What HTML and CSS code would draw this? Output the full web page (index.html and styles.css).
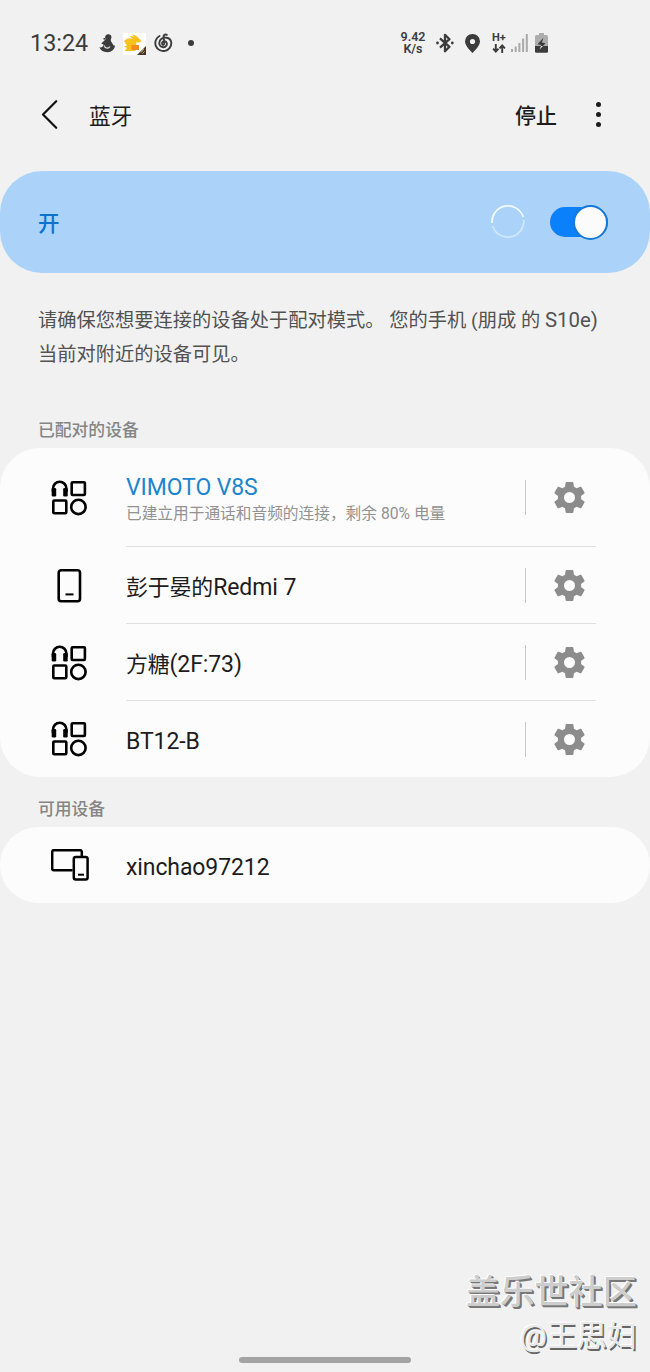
FILE: index.html
```html
<!DOCTYPE html>
<html lang="zh-CN">

<head>
    <meta charset="UTF-8">
    <meta name="viewport" content="width=device-width, initial-scale=1.0">
    <title>蓝牙</title>
    <link rel="stylesheet" href="styles.css">
</head>

<body>
    <!-- Shared icons -->
    <svg class="icon-defs" width="0" height="0">
        <symbol id="icon-audio" viewBox="0 0 36 36">
            <g fill="none" stroke="#000" stroke-width="2.6">
                <path d="M2 12V8.500a6.700 6.700 0 0 1 13.400 0V12" />
                <rect x="20.700" y="2.200" width="13.200" height="12.800" rx="1" />
                <rect x="2.300" y="20.500" width="13" height="12.800" rx="1" />
                <circle cx="27.400" cy="26.900" r="7.200" />
            </g>
            <rect x="0.700" y="8" width="4.500" height="8.500" rx="1.300" />
            <rect x="12.200" y="8" width="4.500" height="8.500" rx="1.300" />
        </symbol>
        <symbol id="icon-gear" viewBox="2.4 2.4 19.2 19.2">
            <path d="M19.14 12.94c.04-.3.06-.61.06-.94 0-.32-.02-.64-.07-.94l2.03-1.58a.49.49 0 0 0 .12-.61l-1.92-3.32a.49.49 0 0 0-.59-.22l-2.39.96a7 7 0 0 0-1.62-.94l-.36-2.54a.48.48 0 0 0-.48-.41h-3.84a.47.47 0 0 0-.47.41l-.36 2.54c-.59.24-1.13.57-1.62.94l-2.39-.96a.48.48 0 0 0-.59.22L2.74 8.87a.48.48 0 0 0 .12.61l2.03 1.58c-.05.3-.09.63-.09.94s.02.64.07.94l-2.03 1.58a.49.49 0 0 0-.12.61l1.92 3.32c.12.22.37.29.59.22l2.39-.96c.5.38 1.03.7 1.62.94l.36 2.54c.05.24.24.41.48.41h3.84c.24 0 .44-.17.47-.41l.36-2.54c.59-.24 1.13-.56 1.62-.94l2.39.96c.22.08.47 0 .59-.22l1.92-3.32a.48.48 0 0 0-.12-.61l-2.01-1.58zM12 15.4a3.4 3.4 0 1 1 0-6.8 3.4 3.4 0 0 1 0 6.8z" />
        </symbol>
    </svg>

    <div class="status-bar">
        <div class="status-left">
            <span class="clock">13:24</span>
            <svg class="ico-app" width="16" height="19" viewBox="0 0 16 19">
                <circle cx="9.3" cy="3.3" r="3.1" />
                <path d="M6.3 3.6 3.6 4.9l3 1.1zM7 5l4.800.3c-.3 2 .6 2.700 1.500 4C14.500 10.800 14.300 12 16 11.500c-.4 3.800-3.200 6.700-7.600 6.700-4 0-7-1.700-8.100-4.900 2.200.5 3.800-.5 4.500-2.500L2.200 9.600z" />
                <path d="M5.500 11.500c0 3 3.800 3.500 5.500 1" fill="none" stroke="#f1f1f1" stroke-width="1.100" />
            </svg>
            <svg class="ico-deer" width="23" height="22" viewBox="0 0 23 22">
                <path d="M0 0h23v22H0z" fill="#fff" />
                <path d="M1 8 4.500 5.500h5L6.500 3l4.500.5L8.500 1l5 2 2.500 2.500L18.500 8l-2 1.500-3-.2L12.500 14v4H1.500l2.500-3-3-1.500 3-1z" fill="#f7c21c" />
                <path d="M8.500 12H16v5H8.500z" fill="#f28a1e" />
                <path d="M23 13v9h-9z" fill="#4a3325" />
                <path d="m18 19.500 3-3.500M19.500 20.500l2-2" stroke="#c9ae91" stroke-width="1" />
            </svg>
            <svg class="ico-music" width="19" height="20" viewBox="0 0 19 20" fill="none" stroke="#3c3c3c" stroke-width="1.900" stroke-linecap="round">
                <path d="M5.500 3A8 8 0 1 0 17.300 9.500C17 7 15 5 12.500 4.700 8.500 4.200 5.500 6.500 5.300 9.800c-.2 3 2 4.500 4.200 4.400 2.400-.2 3.700-2 3.300-4-.5-2.300-3.700-2.600-4.600-.7-.6 1.500.5 2.600 1.500 2.200 1.300-.6.300-4-.1-7.700-.2-2 1.400-3 3.200-2.200" />
            </svg>
            <span class="more-dot"></span>
        </div>
        <div class="status-right">
            <span class="net-speed"><span>9.42</span><span>K/s</span></span>
            <svg class="ico-bt" width="18" height="20" viewBox="0 0 18 20">
                <path d="m4 5.300 9.500 8.500L9 18.200V1.800l4.500 4.400L4 14.700" fill="none" stroke="#3c3c3c" stroke-width="2.300" stroke-linejoin="round" />
                <circle cx="1.500" cy="10" r="1.400" />
                <circle cx="16.300" cy="10" r="1.400" />
            </svg>
            <svg class="ico-pin" width="15" height="19" viewBox="0 0 15 19">
                <path fill-rule="evenodd" d="M7.500 0A7.400 7.400 0 0 0 0 7.300C0 12.300 7.500 19 7.500 19S15 12.300 15 7.300A7.400 7.400 0 0 0 7.500 0zm0 4.900a2.600 2.600 0 1 1 0 5.200 2.600 2.600 0 0 1 0-5.200z" />
            </svg>
            <span class="net-type">
                <span>H+</span>
                <svg width="14" height="9" viewBox="0 0 13 9" fill="none" stroke="#3c3c3c" stroke-width="1.900">
                    <path d="M3.300 0v7.500M.6 4.700l2.700 2.900L6 4.700M9.700 9V1.500M7 4.300l2.700-2.900 2.700 2.900" />
                </svg>
            </span>
            <svg class="ico-signal" width="17" height="18" viewBox="0 0 17 18">
                <path d="M0 15h2v3H0zM3.700 12.500h2V18h-2zM7.400 9h2v9h-2zM11.100 4.500h2V18h-2zM14.800 0h2v18h-2z" fill="#a9a9a9" />
            </svg>
            <svg class="ico-battery" width="13" height="20" viewBox="0 0 13 20">
                <path d="M4 0h5v2h2.500A1.500 1.500 0 0 1 13 3.500V13H0V3.500A1.500 1.500 0 0 1 1.500 2H4z" fill="#adadad" />
                <path d="M0 13h13v5.500a1.300 1.300 0 0 1-1.300 1.300H1.300A1.300 1.300 0 0 1 0 18.500z" />
                <path d="M8.500 4.800 2.500 11.300l3.600.7-1.600 4.500 6-6.200-3.700-.8z" />
                <path d="m6.100 13-1.600 3.500L8 13z" fill="#eee" />
            </svg>
        </div>
    </div>

    <header class="toolbar">
        <svg class="back" width="17" height="29" viewBox="0 0 17 29">
            <path d="M15.200 1.200 2 14.500l13.200 13.300" fill="none" stroke="#111" stroke-width="2.200" stroke-linecap="round" stroke-linejoin="round" />
        </svg>
        <h1>蓝牙</h1>
        <span class="stop">停止</span>
        <span class="menu"><i></i><i></i><i></i></span>
    </header>

    <section class="switch-bar">
        <span class="switch-label">开</span>
        <svg class="spinner" width="34" height="34" viewBox="0 0 34 34" fill="none" stroke-width="1.700">
            <path d="M1 18A16 16 0 0 1 32.200 12" stroke="#f2fbff" />
            <path d="M32.800 15A16 16 0 0 1 1.600 21" stroke="#cfe8fb" />
        </svg>
        <span class="toggle"><span class="thumb"></span></span>
    </section>

    <p class="hint">请确保您想要连接的设备处于配对模式。 您的手机 (朋成 的 <span class="model">S10e)</span><br>当前对附近的设备可见。</p>

    <h2 class="paired-title">已配对的设备</h2>
    <div class="card">
        <div class="device connected">
            <svg class="device-icon"><use href="#icon-audio" /></svg>
            <div class="device-body">
                <div class="device-text">
                    <div class="name">VIMOTO V8S</div>
                    <div class="detail">已建立用于通话和音频的连接，剩余 80% 电量</div>
                </div>
                <svg class="gear"><use href="#icon-gear" /></svg>
            </div>
        </div>
        <div class="device">
            <svg class="device-icon" viewBox="0 0 36 36">
                <rect x="7.700" y="2.200" width="21.300" height="31" rx="2.500" fill="none" stroke="#000" stroke-width="2.600" />
                <path d="M14.500 26.400h8" stroke="#000" stroke-width="2" />
            </svg>
            <div class="device-body">
                <div class="device-text">
                    <div class="name"><span class="zh">彭于晏的</span>Redmi 7</div>
                </div>
                <svg class="gear"><use href="#icon-gear" /></svg>
            </div>
        </div>
        <div class="device">
            <svg class="device-icon"><use href="#icon-audio" /></svg>
            <div class="device-body">
                <div class="device-text">
                    <div class="name"><span class="zh">方糖</span>(2F:73)</div>
                </div>
                <svg class="gear"><use href="#icon-gear" /></svg>
            </div>
        </div>
        <div class="device">
            <svg class="device-icon"><use href="#icon-audio" /></svg>
            <div class="device-body">
                <div class="device-text">
                    <div class="name">BT12-B</div>
                </div>
                <svg class="gear"><use href="#icon-gear" /></svg>
            </div>
        </div>
    </div>

    <h2 class="available-title">可用设备</h2>
    <div class="card">
        <div class="device">
            <svg class="device-icon wide" viewBox="0 0 38 32">
                <g fill="none" stroke="#000" stroke-width="2.500">
                    <path d="M21.500 21.300H2.700a1.500 1.500 0 0 1-1.500-1.500V2.700a1.500 1.500 0 0 1 1.500-1.500h26.600a1.500 1.500 0 0 1 1.500 1.500V8" />
                    <rect x="22.800" y="8" width="13.800" height="22.600" rx="2" />
                </g>
                <path d="M27 25.700h6" stroke="#000" stroke-width="2" />
            </svg>
            <div class="device-body">
                <div class="device-text">
                    <div class="name">xinchao97212</div>
                </div>
            </div>
        </div>
    </div>

    <footer class="footer">
        <div class="mark-site">盖乐世社区</div>
        <div class="mark-user">@王思妇</div>
        <div class="home-bar"></div>
    </footer>
</body>

</html>
```
FILE: styles.css
```css
* {
    box-sizing: border-box;
}

body {
    margin: 0;
    height: 1372px;
    display: flex;
    flex-direction: column;
    font-family: Roboto, "Noto Sans CJK SC", sans-serif;
    background-color: #f1f1f1;
    color: #1c1c1c;
    overflow: hidden;
}

svg {
    display: block;
    flex: none;
}

.icon-defs {
    position: absolute;
}

/* Status bar */
.status-bar {
    height: 86px;
    padding: 0 102px 0 30px;
    display: flex;
    justify-content: space-between;
    align-items: center;
    color: #3c3c3c;
    fill: #3c3c3c;
}

.status-left,
.status-right {
    display: flex;
    align-items: center;
}

.clock {
    width: 69px;
    font-size: 23.4px;
}

.ico-deer {
    margin-left: 8px;
    margin-top: 2px;
}

.ico-music {
    margin-left: 8px;
}

.more-dot {
    width: 6px;
    height: 6px;
    margin-left: 15px;
    border-radius: 50%;
    background-color: #3c3c3c;
}

.net-speed {
    width: 26px;
    display: grid;
    font-size: 12.5px;
    font-weight: 600;
    line-height: 12px;
    text-align: center;
}

.ico-bt {
    margin-left: 10px;
}

.ico-pin {
    margin-left: 11px;
}

.net-type {
    width: 15px;
    margin-left: 12px;
    font-size: 11px;
    font-weight: bold;
    line-height: 10px;
}

.net-type span {
    display: block;
    margin-bottom: 1px;
}

.ico-signal {
    margin-left: 4px;
}

.ico-battery {
    margin-left: 7px;
}

/* Toolbar */
.toolbar {
    height: 85px;
    padding: 0 49px 28px 41px;
    display: flex;
    align-items: center;
}

h1 {
    margin: 0 auto 1px 31px;
    font-size: 21.7px;
    font-weight: 400;
}

.stop {
    margin-bottom: 2px;
    font-size: 21px;
    font-weight: 500;
}

.menu {
    width: 5px;
    margin-left: 39px;
    display: grid;
    gap: 5px;
}

.menu i {
    width: 5px;
    height: 5px;
    border-radius: 50%;
    background-color: #1c1c1c;
}

/* On / off bar */
.switch-bar {
    height: 102px;
    padding: 0 42px 0 38px;
    display: flex;
    align-items: center;
    border-radius: 42px;
    background-color: #abd2f9;
}

.switch-label {
    margin-right: auto;
    margin-bottom: 2px;
    font-size: 21.5px;
    font-weight: 500;
    color: #0b72d0;
}

.toggle {
    width: 58px;
    height: 30px;
    margin-left: 25px;
    display: flex;
    align-items: center;
    justify-content: flex-end;
    border-radius: 15px;
    background-color: #0a80fb;
}

.thumb {
    width: 35px;
    height: 35px;
    flex: none;
    border: 2px solid #1678d8;
    border-radius: 50%;
    background-color: #fbfbfb;
}

.hint {
    margin: 31px 0 0;
    padding-left: 38px;
    font-size: 19.25px;
    line-height: 34px;
    white-space: nowrap;
    color: #525252;
}

.model {
    font-size: 20.4px;
    line-height: 1;
}

h2 {
    margin: 0;
    padding-left: 38px;
    font-size: 16.8px;
    font-weight: 500;
    line-height: 24px;
    color: #858585;
}

.paired-title {
    margin: 46px 0 6px;
}

.available-title {
    margin: 20px 0 6px;
}

/* Device lists */
.card {
    border-radius: 40px;
    background-color: #fcfcfc;
}

.device {
    height: 77px;
    padding-left: 51px;
    display: flex;
    align-items: center;
}

.device:last-child {
    height: 76px;
}

.connected {
    height: 99px;
}

.device-icon {
    width: 36px;
    height: 36px;
    margin-right: 39px;
}

.device-icon.wide {
    width: 38px;
    height: 32px;
    margin-right: 37px;
}

.device-body {
    width: 470px;
    height: 100%;
    display: flex;
    align-items: center;
    border-bottom: 1px solid #e0e0e0;
}

.device:last-child .device-body {
    border-bottom: none;
}

.device-text {
    flex: 1;
}

.name {
    padding-top: 5px;
    font-size: 23px;
    letter-spacing: -0.1px;
    line-height: 28px;
}

.zh {
    font-size: 21.9px;
    line-height: 1;
}

.connected .name {
    padding-top: 5px;
    color: #1b84cf;
}

.detail {
    font-size: 15.7px;
    line-height: 23px;
    color: #929292;
}

.gear {
    width: 71px;
    height: 35px;
    padding: 1px 11px 1px 28px;
    border-left: 1px solid #c6c6c6;
    fill: #8c8c8c;
}

/* Bottom of the screen */
.footer {
    margin-top: auto;
    padding: 0 13px 9px;
    text-align: right;
}

.mark-site {
    font-size: 34.2px;
    font-weight: 500;
    line-height: 46px;
    color: #cdcdcd;
    text-shadow: -1px -1px 0 #fff, 1px 1px 0 #777, 2px 2px 0 #777;
}

.mark-user {
    font-size: 30px;
    line-height: 42px;
    color: #e8e8e8;
    text-shadow: -1px -1px 0 #fff, 1.5px 1.5px 0 #666;
}

.home-bar {
    width: 172px;
    height: 6px;
    margin: 0 auto;
    border-radius: 3px;
    background-color: #a3a3a3;
}
```
